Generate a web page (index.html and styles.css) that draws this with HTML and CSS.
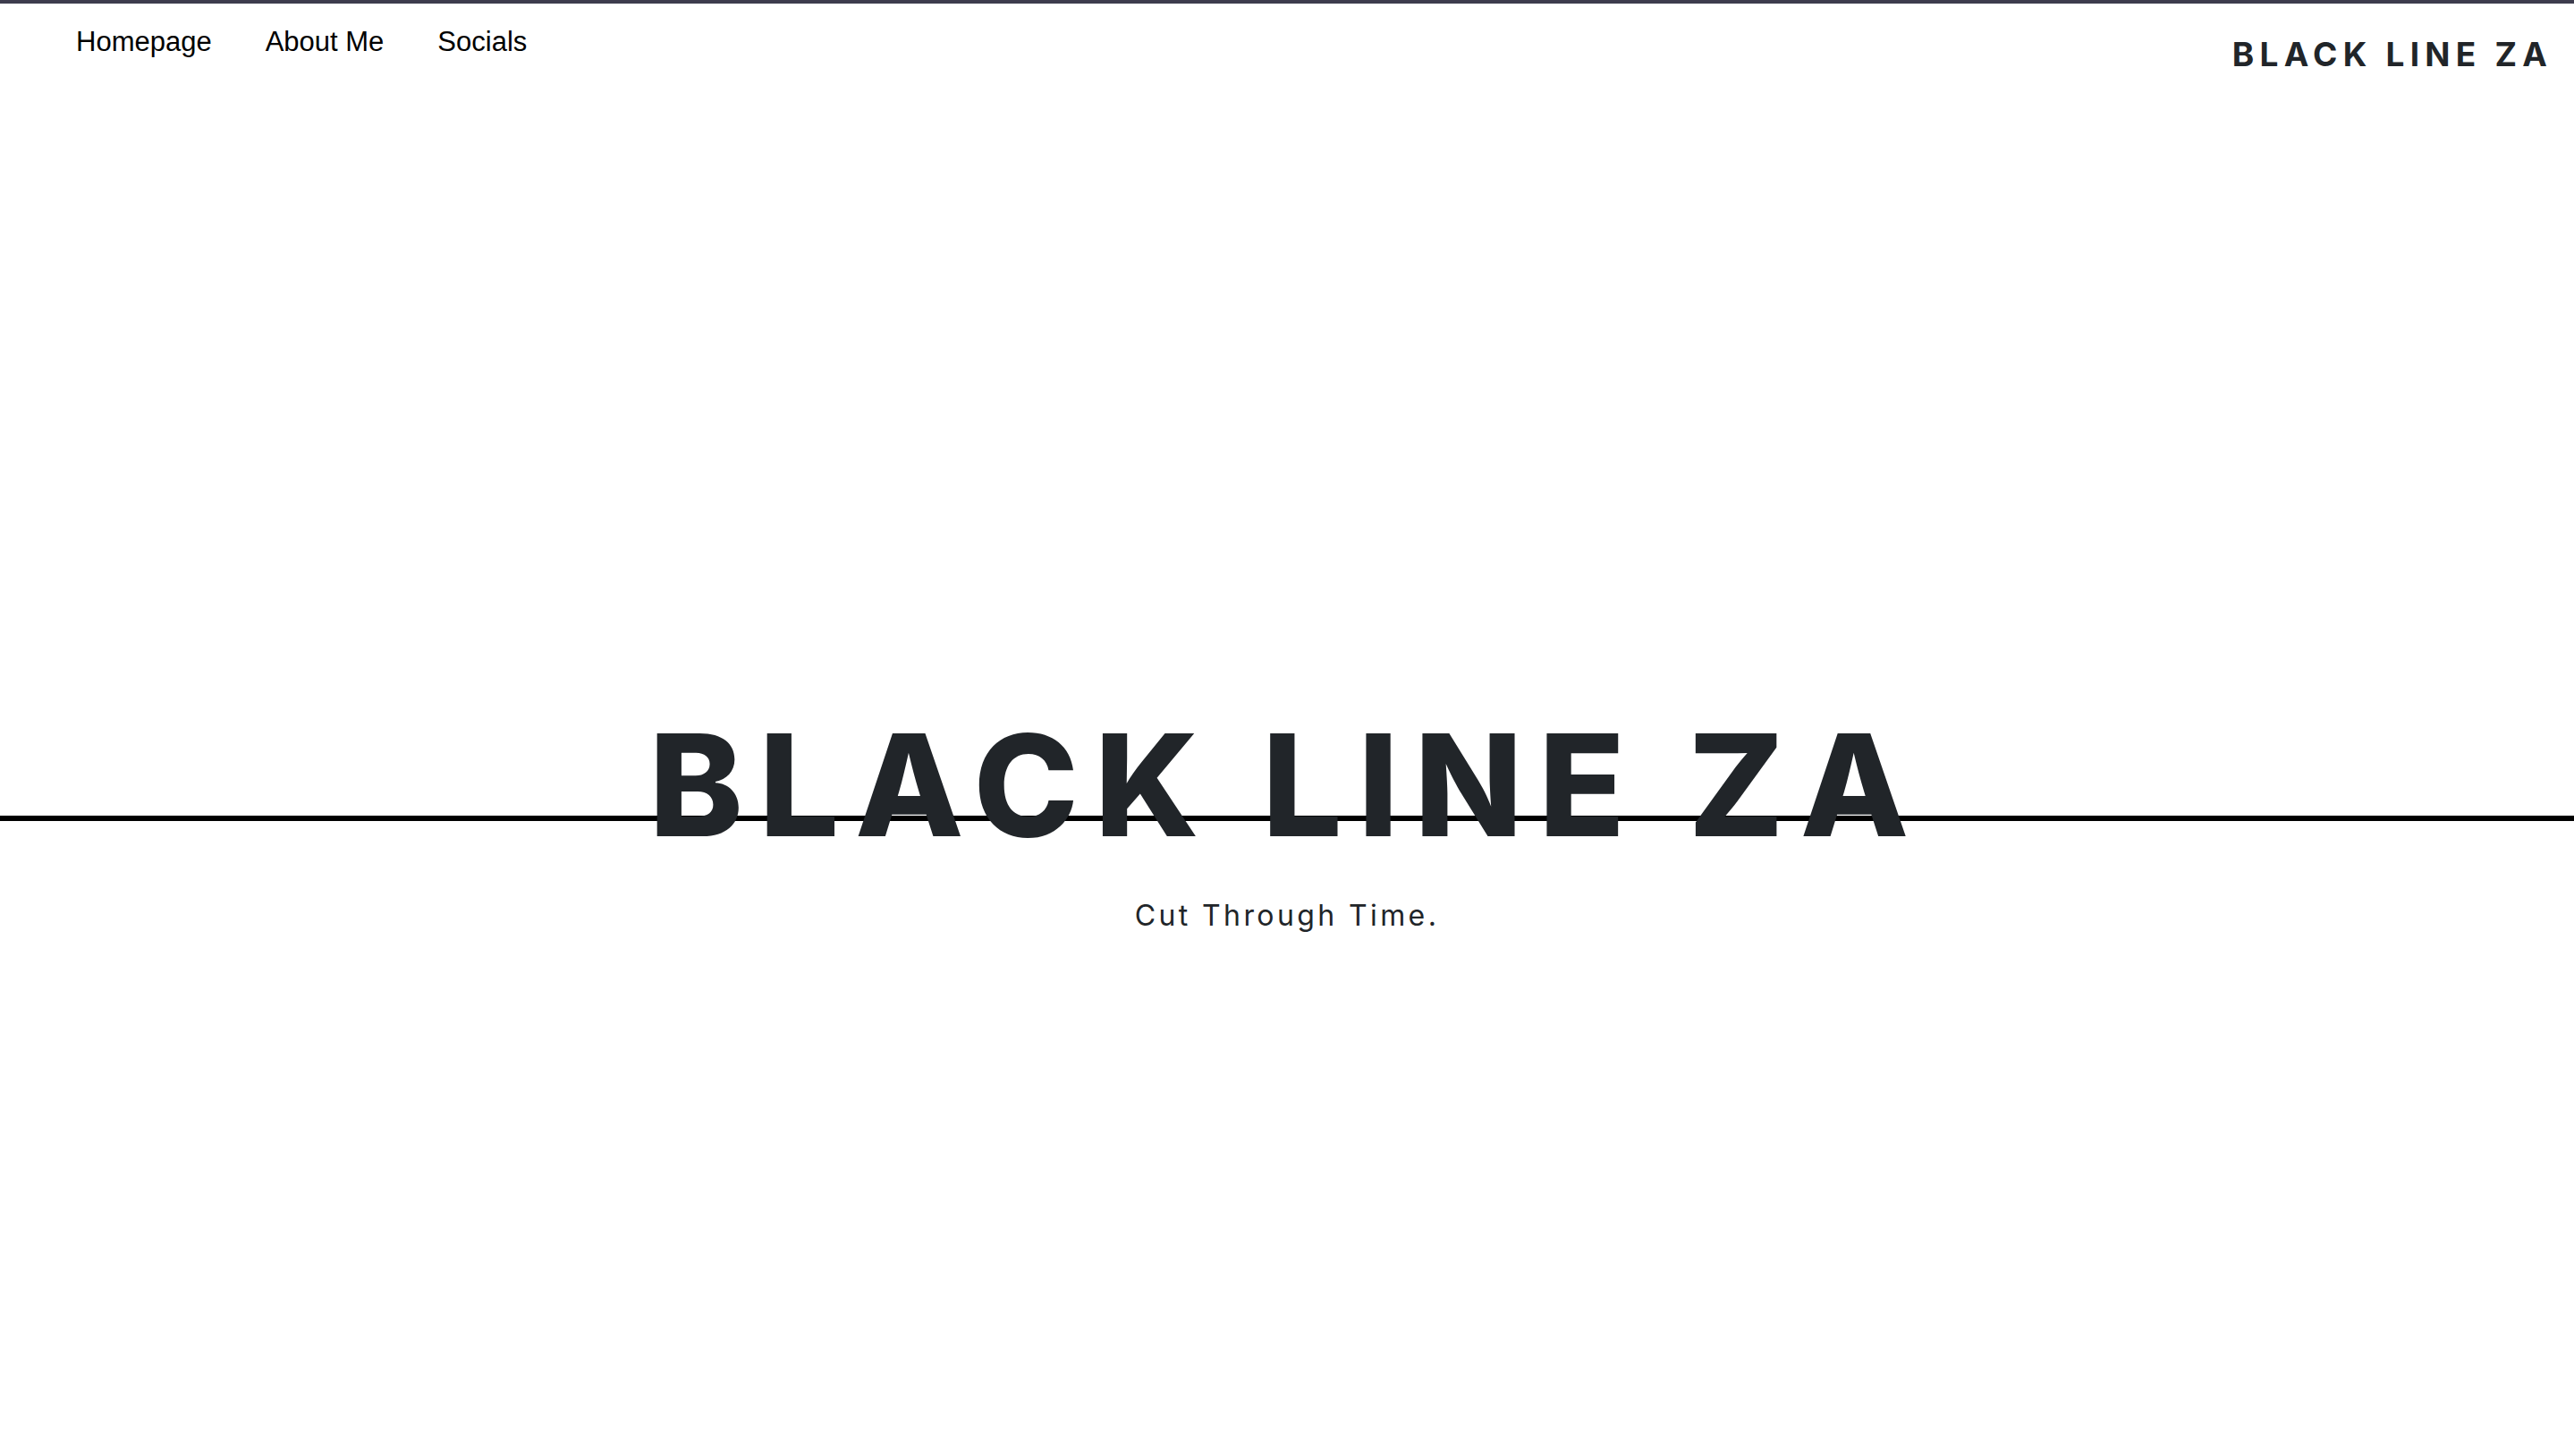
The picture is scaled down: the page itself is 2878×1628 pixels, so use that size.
FILE: index.html
```html
<!DOCTYPE html>
<html lang="en">
<head>
<meta charset="utf-8">
<title>Black Line ZA</title>
<link rel="stylesheet" href="styles.css">
</head>
<body>
<header class="site-header">
  <nav class="main-nav">
    <a class="nav-link" href="#">Homepage</a>
    <a class="nav-link" href="#">About Me</a>
    <a class="nav-link" href="#">Socials</a>
  </nav>
  <div class="brand">BLACK LINE ZA</div>
</header>
<main class="hero">
  <h1 class="hero-title">BLACK LINE ZA</h1>
  <p class="hero-tagline">Cut Through Time.</p>
</main>
</body>
</html>
```
FILE: styles.css
```css
html, body {
  margin: 0;
  padding: 0;
  background: #ffffff;
}

body {
  border-top: 4px solid #3d3c4d;
  font-family: "Liberation Sans", Arial, sans-serif;
  min-height: 100vh;
  box-sizing: border-box;
}

.site-header {
  display: flex;
  justify-content: space-between;
  align-items: flex-start;
  padding: 25px 30px 0 85px;
}

.main-nav {
  display: flex;
  gap: 60px;
}

.nav-link {
  color: #000000;
  text-decoration: none;
  font-size: 31px;
  line-height: 36px;
}

.brand {
  margin-top: 10px;
  font-family: "Inter", "Liberation Sans", sans-serif;
  font-size: 37px;
  line-height: 44px;
  font-weight: 700;
  letter-spacing: 6.25px;
  margin-right: -6.25px;
  color: #212529;
}

.hero {
  padding-top: 699px;
  text-align: center;
}

.hero-title {
  margin: 0;
  font-family: "Inter", "Liberation Sans", sans-serif;
  font-size: 158px;
  line-height: 192px;
  font-weight: 800;
  letter-spacing: 18px;
  color: #212529;
  background: linear-gradient(to bottom,
    transparent 0, transparent 130px,
    #000000 130px, #000000 136px,
    transparent 136px, transparent 100%);
}

.hero-tagline {
  margin: 30px 0 0;
  font-family: "Inter", "Liberation Sans", sans-serif;
  font-size: 32px;
  line-height: 40px;
  letter-spacing: 3.4px;
  color: #212529;
}
```
